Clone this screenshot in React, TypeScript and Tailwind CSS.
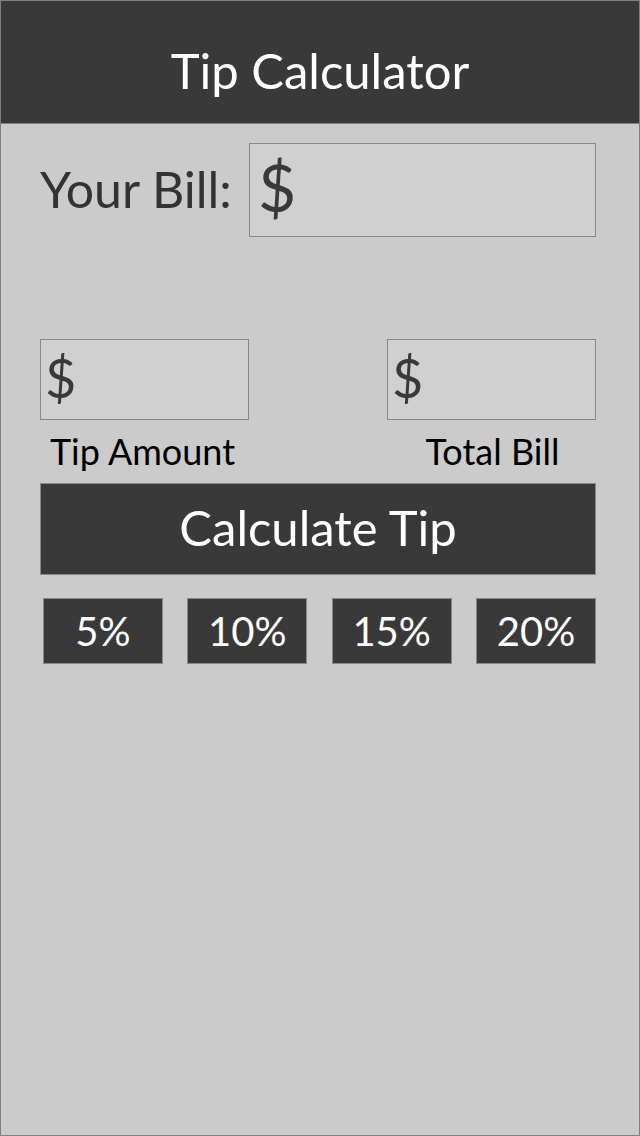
const percents = ["5%", "10%", "15%", "20%"];

export default function App() {
  return (
    <div
      className="w-[640px] h-[1136px] border border-[#808080] bg-[#cbcbcb] flex flex-col"
      style={{ fontFamily: "'Lato', 'Open Sans', sans-serif" }}
    >
      <header className="h-[123px] shrink-0 bg-[#393939] border-b border-[#808080] flex items-center justify-center pt-[16px]">
        <h1 className="text-white text-[49px] leading-none">Tip Calculator</h1>
      </header>

      <main className="pl-[39px] pr-[43px]">
        {/* Bill input row */}
        <div className="flex items-center mt-[19px]">
          <label className="text-[#333333] text-[50px] leading-none w-[209px] -mt-[2px]">Your Bill:</label>
          <div className="flex-1 h-[94px] border border-[#888888] bg-[#d0d0d0] flex items-center pl-[8px]">
            <span className="text-[#393939] text-[66px] leading-none -mt-[6px]">$</span>
          </div>
        </div>

        {/* Results */}
        <div className="flex justify-between mt-[102px]">
          <div className="w-[209px] flex flex-col">
            <div className="h-[81px] border border-[#888888] bg-[#d0d0d0] flex items-center pl-[4px]">
              <span className="text-[#393939] text-[54px] leading-none -mt-[4px]">$</span>
            </div>
            <span className="text-black text-[36px] leading-none mt-[13px] text-center pr-[4px]">Tip Amount</span>
          </div>
          <div className="w-[209px] flex flex-col">
            <div className="h-[81px] border border-[#888888] bg-[#d0d0d0] flex items-center pl-[4px]">
              <span className="text-[#393939] text-[54px] leading-none -mt-[4px]">$</span>
            </div>
            <span className="text-black text-[36px] leading-none mt-[13px] text-center pl-[2px]">Total Bill</span>
          </div>
        </div>

        <button className="w-full h-[92px] mt-[14px] bg-[#393939] border border-[#888888] text-white text-[49px] leading-none flex items-center justify-center pb-[4px]">
          Calculate Tip
        </button>

        <div className="flex justify-between mt-[23px] pl-[3px]">
          {percents.map((p) => (
            <button
              key={p}
              className="w-[120px] h-[66px] bg-[#393939] border border-[#888888] text-white text-[40px] leading-none flex items-center justify-center"
            >
              {p}
            </button>
          ))}
        </div>
      </main>
    </div>
  );
}
